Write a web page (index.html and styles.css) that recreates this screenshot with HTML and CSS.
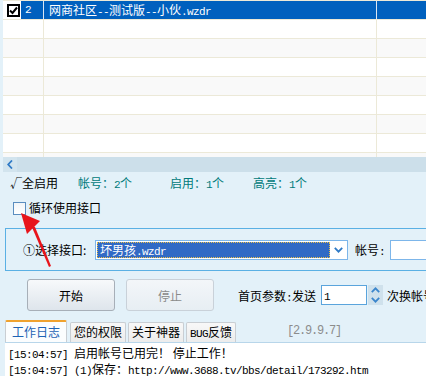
FILE: index.html
```html
<!DOCTYPE html>
<html>
<head>
<meta charset="utf-8">
<link rel="stylesheet" href="styles.css">
</head>
<body>
<div class="app">
  <div class="list">
    <div class="row sel">
      <div class="c0"><span class="chk"><span class="cbx"><svg width="9" height="9" viewBox="0 0 9 9"><path d="M1 4.5 L3.5 7 L8 1.5" fill="none" stroke="#000" stroke-width="2"/></svg></span></span><span class="num m">2</span></div>
      <div class="c1">网商社区<span class="m">--</span>测试版<span class="m">--</span>小伙<span class="m">.wzdr</span></div>
      <div class="c2"></div>
    </div>
    <div class="row"><div class="c0"></div><div class="c1"></div><div class="c2"></div></div>
    <div class="row"><div class="c0"></div><div class="c1"></div><div class="c2"></div></div>
    <div class="row"><div class="c0"></div><div class="c1"></div><div class="c2"></div></div>
    <div class="row"><div class="c0"></div><div class="c1"></div><div class="c2"></div></div>
    <div class="row"><div class="c0"></div><div class="c1"></div><div class="c2"></div></div>
    <div class="row"><div class="c0"></div><div class="c1"></div><div class="c2"></div></div>
    <div class="row"><div class="c0"></div><div class="c1"></div><div class="c2"></div></div>
    <div class="row"><div class="c0"></div><div class="c1"></div><div class="c2"></div></div>
  </div>
  <div class="hscroll">
    <span class="sbtn"><svg width="6" height="9" viewBox="0 0 6 9"><path d="M5 0.5 L1.2 4.5 L5 8.5" fill="none" stroke="#2F7AC6" stroke-width="1.8"/></svg></span>
  </div>
  <div class="status">
    <span class="s0">√全启用</span>
    <span class="s1 teal">帐号：<span class="m">2</span>个</span>
    <span class="s2 teal">启用：<span class="m">1</span>个</span>
    <span class="s3 teal">高亮：<span class="m">1</span>个</span>
  </div>
  <div class="loop">
    <span class="box"></span><span class="loop-label">循环使用接口</span>
  </div>
  <div class="group">
    <span class="glabel">①选择接口:</span>
    <div class="combo">
      <div class="csel">坏男孩<span class="m">.wzdr</span></div>
      <span class="carr"><svg width="9" height="6" viewBox="0 0 9 6"><path d="M0.8 0.8 L4.5 4.6 L8.2 0.8" fill="none" stroke="#2F7AC6" stroke-width="1.8"/></svg></span>
    </div>
    <span class="alabel">帐号<span class="m">:</span></span>
    <div class="acct"></div>
  </div>
  <div class="actions">
    <button class="btn">开始</button>
    <button class="btn dis">停止</button>
    <span class="plabel">首页参数<span class="m">:</span>发送</span>
    <div class="num-input"><span class="m">1</span></div>
    <div class="spin">
      <span class="sp"><svg width="9" height="6" viewBox="0 0 9 6"><path d="M0.8 5.2 L4.5 1.4 L8.2 5.2" fill="none" stroke="#3B86CC" stroke-width="1.8"/></svg></span>
      <span class="sp"><svg width="9" height="6" viewBox="0 0 9 6"><path d="M0.8 0.8 L4.5 4.6 L8.2 0.8" fill="none" stroke="#3B86CC" stroke-width="1.8"/></svg></span>
    </div>
    <span class="plabel2">次换帐号</span>
  </div>
  <div class="tabs">
    <span class="tab active">工作日志</span>
    <span class="tab">您的权限</span>
    <span class="tab">关于神器</span>
    <span class="tab"><span class="m">BUG</span>反馈</span>
    <span class="ver m">[2.9.9.7]</span>
  </div>
  <div class="log">
    <div class="line"><span class="m">[15:04:57] </span>启用帐号已用完！ 停止工作！</div>
    <div class="line"><span class="m">[15:04:57] (1)</span>保存：<span class="m">http://www.3688.tv/bbs/detail/173292.htm</span></div>
  </div>
  <svg class="arrow" width="60" height="70" viewBox="0 0 60 70">
    <polygon points="1,3 20,11 7,24" fill="#E8141B"/>
    <polygon points="11,15 15,17 31,56 29,57" fill="#E8141B"/>
  </svg>
</div>
</body>
</html>
```
FILE: styles.css
```css
* { box-sizing: border-box; }
html, body { margin: 0; padding: 0; }
body {
  width: 426px;
  height: 376px;
  overflow: hidden;
  background: #E3F1F9;
  font-family: "Noto Sans CJK SC", "Liberation Sans", sans-serif;
  font-size: 12px;
  color: #000;
}
.app { position: relative; width: 426px; height: 376px; overflow: hidden; }
.m {
  font-family: "Liberation Mono", monospace;
  font-size: 11px;
  letter-spacing: -0.6px;
}
.list {
  margin-left: 3px;
  height: 157px;
  overflow: hidden;
  background: #fff;
  border-top: 1px solid #ECE9D8;
}
.row {
  display: flex;
  height: 19px;
  line-height: 18px;
  border-bottom: 1px solid #ECE9D8;
  background: #fff;
}
.row:nth-child(odd) { background: #F9F9F9; }
.row.sel { background: #0060BE; color: #fff; }
.c0 { width: 41px; border-right: 1px solid #ECE9D8; display: flex; flex: none; }
.c1 { width: 333px; border-right: 1px solid #ECE9D8; padding-left: 5px; flex: none; white-space: nowrap; }
.c2 { flex: 1; }
.sel .c0, .sel .c1 { border-right-color: #D9E6F3; }
.chk { width: 18px; background: #fff; display: flex; align-items: center; padding-left: 4px; }
.cbx {
  width: 13px; height: 13px;
  border: 2px solid #000;
  background: #fff;
  display: flex; align-items: center; justify-content: center;
}
.num { padding-left: 4px; color: #fff; }
.hscroll {
  margin-left: 3px;
  height: 15px;
  background: #CCDFEA;
  display: flex;
}
.sbtn {
  width: 14px;
  background: #D2E4EE;
  display: flex; align-items: center; justify-content: center;
}
.status {
  margin-top: 4px;
  height: 14px;
  line-height: 14px;
  display: flex;
  padding-left: 10px;
  white-space: nowrap;
}
.status > span { flex: none; }
.teal { color: #007A7A; }
.s0 { width: 68px; }
.s1 { width: 92px; }
.s2 { width: 83px; }
.loop {
  margin-top: 11px;
  height: 14px;
  display: flex;
  align-items: center;
  padding-left: 13px;
  line-height: 14px;
}
.box {
  width: 13px; height: 13px;
  border: 1px solid #5A8DBF;
  background: linear-gradient(#F2F5F8, #FFFFFF);
  margin-right: 3px;
}
.group {
  margin-top: 13px;
  margin-left: 5px;
  height: 43px;
  border: 1px solid #5AB0E4;
  border-right: none;
  display: flex;
  align-items: center;
  padding-left: 17px;
  white-space: nowrap;
}
.group > * { flex: none; }
.glabel { width: 72px; }
.combo {
  width: 253px; height: 20px;
  border: 1px solid #7DB6EA;
  background: #fff;
  display: flex;
  align-items: center;
  padding: 1px;
}
.csel {
  width: 233px; height: 16px;
  background: #316AC5;
  color: #fff;
  border: 1px dotted #E9C04A;
  line-height: 14px;
  padding-left: 2px;
  flex: none;
}
.carr { flex: 1; display: flex; justify-content: center; align-items: center; }
.alabel { margin-left: 7px; width: 35px; }
.acct {
  width: 60px; height: 20px;
  border: 1px solid #7DB6EA;
  background: #fff;
}
.actions {
  margin-top: 8px;
  height: 32px;
  display: flex;
  align-items: center;
  padding-left: 27px;
  white-space: nowrap;
}
.actions > * { flex: none; }
.btn {
  width: 88px; height: 32px;
  border: 1px solid #A7AFB8;
  border-radius: 3px;
  background: linear-gradient(#F7F9FB, #DEE5EC);
  font-family: "Noto Sans CJK SC", sans-serif;
  font-size: 12px;
  color: #000;
  padding: 0;
  margin-right: 11px;
}
.btn.dis {
  border-color: #C9D1D9;
  background: linear-gradient(#F3F6F9, #E7EEF3);
  color: #8A8A8A;
  margin-right: 24px;
}
.plabel { width: 83px; }
.num-input {
  width: 46px; height: 20px;
  border: 1px solid #5AA4DC;
  background: #fff;
  line-height: 18px;
  padding-left: 2px;
}
.spin { width: 15px; height: 20px; margin-left: 1px; display: flex; flex-direction: column; }
.sp { flex: 1; background: #CFE1EC; display: flex; align-items: center; justify-content: center; }
.plabel2 { margin-left: 4px; }
.tabs {
  margin-top: 9px;
  height: 22px;
  display: flex;
  align-items: flex-end;
  padding-left: 5px;
  white-space: nowrap;
}
.tabs > * { flex: none; }
.tab {
  height: 20px;
  line-height: 18px;
  padding: 0 3px;
  border: 1px solid #C9CED3;
  border-bottom: none;
  background: linear-gradient(#F8F8F8, #ECECEC);
  margin-right: 2px;
  border-radius: 2px 2px 0 0;
}
.tab.active {
  height: 22px;
  width: 62px;
  text-align: center;
  border-top: 2px solid #F0A22E;
  background: #FBFDFE;
  color: #1E63B5;
  line-height: 19px;
  margin-right: 3px;
}
.ver {
  color: #8C8C8C;
  margin-left: 49px;
  align-self: center;
  font-size: 12px;
  letter-spacing: -1.2px;
}
.log {
  margin-left: 5px;
  height: 34px;
  background: #fff;
  border-top: 1px solid #B8D6EA;
  padding-left: 3px;
  padding-top: 2px;
  white-space: nowrap;
}
.line { height: 16px; line-height: 16px; }
.arrow {
  position: absolute;
  left: 20px;
  top: 210px;
}
```
